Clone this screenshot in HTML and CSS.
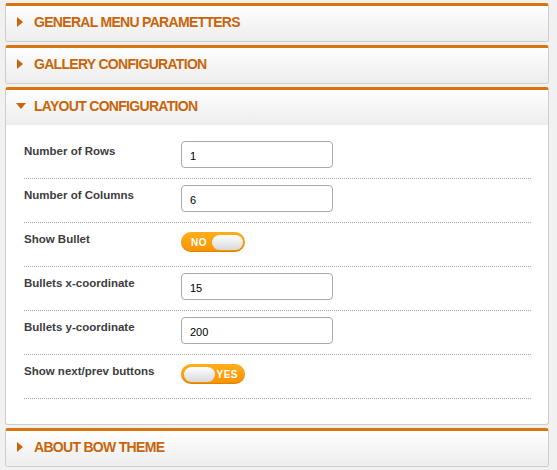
FILE: index.html
```html
<!DOCTYPE html>
<html lang="en">
<head>
    <meta charset="UTF-8">
    <meta name="viewport" content="width=device-width, initial-scale=1.0">
    <title>Bow Theme Options</title>
    <link rel="stylesheet" href="styles.css">
</head>
<body>
    <div class="accordion">
        <div class="panel">
            <div class="panel-head"><span class="arrow"></span>General Menu Parametters</div>
        </div>
        <div class="panel">
            <div class="panel-head"><span class="arrow"></span>Gallery Configuration</div>
        </div>
        <div class="panel open">
            <div class="panel-head"><span class="arrow"></span>Layout Configuration</div>
            <div class="panel-body">
                <div class="row">
                    <label>Number of Rows</label>
                    <input type="text" value="1">
                </div>
                <div class="row">
                    <label>Number of Columns</label>
                    <input type="text" value="6">
                </div>
                <div class="row">
                    <label>Show Bullet</label>
                    <div class="toggle off"><span class="toggle-text">NO</span><span class="knob"></span></div>
                </div>
                <div class="row">
                    <label>Bullets x-coordinate</label>
                    <input type="text" value="15">
                </div>
                <div class="row">
                    <label>Bullets y-coordinate</label>
                    <input type="text" value="200">
                </div>
                <div class="row">
                    <label>Show next/prev buttons</label>
                    <div class="toggle on"><span class="knob"></span><span class="toggle-text">YES</span></div>
                </div>
            </div>
        </div>
        <div class="panel">
            <div class="panel-head"><span class="arrow"></span>About Bow Theme</div>
        </div>
    </div>
</body>
</html>
```

FILE: styles.css
```css
body {
    margin: 0;
    padding: 3px 8px 0 5px;
    background: #f1f1f1;
    font-family: 'Liberation Sans', Arial, sans-serif;
    color: #333;
}
.accordion {
    display: flex;
    flex-direction: column;
    gap: 3px;
}
.panel {
    border: 1px solid #cdcdcd;
    border-top: 3px solid #d9740f;
    border-radius: 3px;
    background: #fff;
    overflow: hidden;
}
.panel-head {
    display: flex;
    align-items: center;
    box-sizing: border-box;
    height: 35px;
    padding: 0 0 4px 11px;
    background: linear-gradient(#fefefe, #ededed);
    color: #c8650b;
    font-size: 14px;
    font-weight: bold;
    letter-spacing: -0.7px;
    text-transform: uppercase;
}
.arrow {
    width: 0;
    height: 0;
    margin-right: 11px;
    border-top: 5px solid transparent;
    border-bottom: 5px solid transparent;
    border-left: 6px solid #c8650b;
}
.open .arrow {
    margin-left: -1px;
    margin-right: 8px;
    border-left: 5px solid transparent;
    border-right: 5px solid transparent;
    border-top: 6px solid #c8650b;
    border-bottom: 0;
}
.panel-body {
    padding: 10px 17px 25px 18px;
}
.row {
    display: flex;
    align-items: flex-start;
    min-height: 27px;
    padding: 6px 0 10px;
    border-bottom: 1px dotted #aaa;
}
.row label {
    width: 157px;
    padding-top: 4px;
    font-size: 11.5px;
    font-weight: bold;
    color: #3d3d3d;
}
.row input {
    box-sizing: border-box;
    width: 152px;
    height: 27px;
    padding: 2px 8px 0;
    border: 1px solid #a9a9a9;
    border-radius: 4px;
    font-family: 'Liberation Sans', Arial, sans-serif;
    font-size: 11px;
    color: #000;
}
.toggle {
    display: flex;
    align-items: center;
    justify-content: space-between;
    box-sizing: border-box;
    width: 64px;
    height: 20px;
    margin-top: 3px;
    padding: 0 2px 0 3px;
    border-radius: 10px;
    background: linear-gradient(#ffae1a, #f79400);
    box-shadow: inset 0 -1px 1px rgba(180, 90, 0, 0.35);
}
.toggle.off {
    padding-left: 10px;
}
.toggle.on {
    padding-right: 7px;
}
.toggle-text {
    color: #fff;
    font-size: 10px;
    font-weight: bold;
    letter-spacing: 0.5px;
}
.knob {
    width: 31px;
    height: 15px;
    border-radius: 8px;
    background: linear-gradient(#ffffff, #d9d9d9);
}
```
